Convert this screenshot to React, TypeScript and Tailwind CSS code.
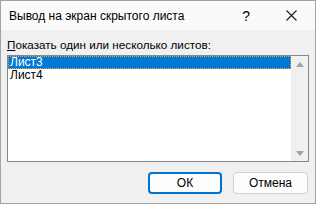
const font = { fontFamily: '"Segoe UI", "Liberation Sans", sans-serif' };

export default function App() {
  return (
    <div
      className="flex h-[204px] w-[316px] flex-col border border-[#a3a3a3] bg-[#f0f0f0] text-black"
      style={font}
    >
      {/* title bar */}
      <div className="flex h-[29px] items-center bg-[#fafafa]">
        <span className="ml-[8px] text-[12px]">Вывод на экран скрытого листа</span>
        <span className="ml-auto text-[14px] leading-none">?</span>
        <svg className="ml-[36px] mr-[18px]" width="11" height="11" viewBox="0 0 11 11">
          <path d="M0.5 0.5L10.5 10.5M10.5 0.5L0.5 10.5" stroke="#1a1a1a" strokeWidth="1.1" />
        </svg>
      </div>

      <div className="flex flex-1 flex-col px-[6px] pt-[7px]">
        <div className="text-[11.7px] leading-[16px]">
          <span className="underline">П</span>оказать один или несколько листов:
        </div>

        {/* list box */}
        <div className="mt-[2px] flex h-[107px] border border-[#828790] bg-white">
          <div className="flex-1 text-[12px] leading-[13px]">
            <div className="bg-[#0078d7] px-[2px] text-white outline-1 outline-dotted outline-offset-[-1px] outline-[#f5a623]">
              Лист3
            </div>
            <div className="px-[2px]">Лист4</div>
          </div>
          <div className="flex w-[17px] flex-col items-center justify-between bg-[#f0f0f0] pt-[6px] pb-[5px]">
            <svg width="8" height="5" viewBox="0 0 8 5">
              <path d="M4 0L8 5H0Z" fill="#a3a3a3" />
            </svg>
            <svg width="8" height="5" viewBox="0 0 8 5">
              <path d="M0 0H8L4 5Z" fill="#a3a3a3" />
            </svg>
          </div>
        </div>

        {/* buttons */}
        <div className="mt-[10px] flex justify-end gap-[11px] pr-[1px]">
          <button className="h-[22px] w-[74px] rounded-[4px] border-2 border-[#0073cf] bg-[#fdfdfd] text-[12px]">
            ОК
          </button>
          <button className="h-[22px] w-[75px] rounded-[4px] border border-[#d0d0d0] bg-[#fdfdfd] text-[12px]">
            Отмена
          </button>
        </div>
      </div>
    </div>
  );
}
